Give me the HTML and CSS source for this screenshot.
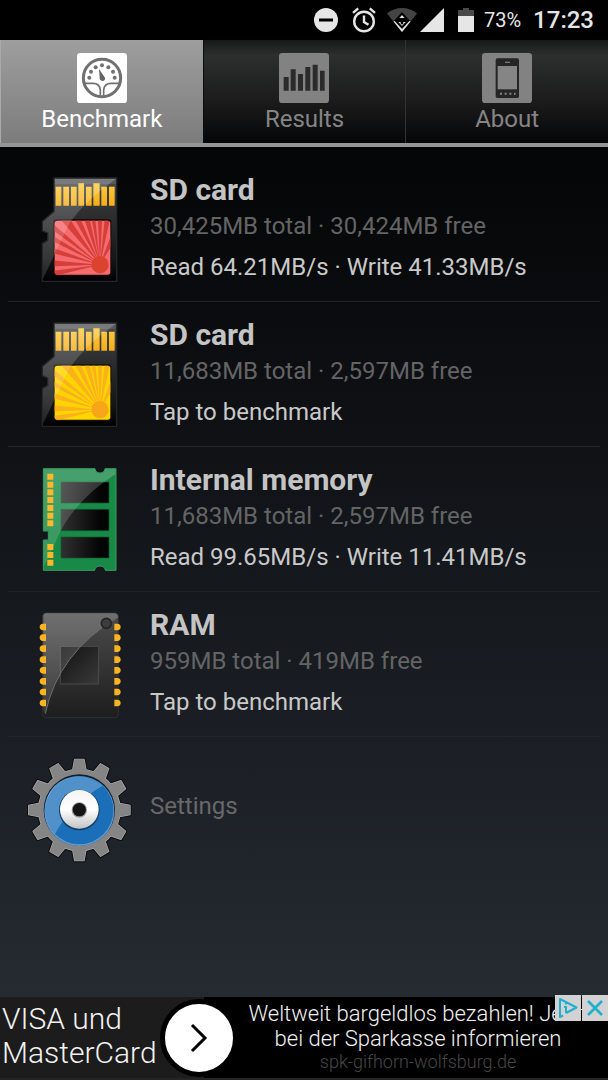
FILE: index.html
```html
<!DOCTYPE html>
<html lang="en">
<head>
<meta charset="utf-8">
<meta name="viewport" content="width=device-width, initial-scale=1">
<title>Benchmark</title>
<link rel="stylesheet" href="styles.css">
</head>
<body>
<svg class="defs" width="0" height="0" aria-hidden="true">
  <defs>
    <linearGradient id="body" x1="0" y1="0" x2="0" y2="1"><stop offset="0" stop-color="#4c4c4d"/><stop offset=".3" stop-color="#303132"/><stop offset=".8" stop-color="#151515"/><stop offset="1" stop-color="#000"/></linearGradient>
    <linearGradient id="gold" x1="0" y1="0" x2="0" y2="1"><stop offset="0" stop-color="#fccb3c"/><stop offset="1" stop-color="#f6ad18"/></linearGradient>
    <linearGradient id="shine" x1="0" y1="0" x2="0" y2="1"><stop offset="0" stop-color="#fff" stop-opacity=".2"/><stop offset="1" stop-color="#fff" stop-opacity=".12"/></linearGradient>
    <linearGradient id="ink" x1="0" y1="0" x2="1" y2="0"><stop offset="0" stop-color="#303030"/><stop offset=".8" stop-color="#050505"/></linearGradient>
    <linearGradient id="chip" x1="0" y1="0" x2="0" y2="1"><stop offset="0" stop-color="#4c4c4c"/><stop offset="1" stop-color="#1d1d1d"/></linearGradient>
    <linearGradient id="die" x1="0" y1="0" x2="1" y2="1"><stop offset="0" stop-color="#111"/><stop offset="1" stop-color="#3a3a3a"/></linearGradient>
    <linearGradient id="hub" x1="0" y1="0" x2="0" y2="1"><stop offset="0" stop-color="#f4f4f4"/><stop offset=".5" stop-color="#fff"/><stop offset="1" stop-color="#c4c4c4"/></linearGradient>
    <clipPath id="label"><rect x="104" y="182" width="167" height="162" rx="8"/></clipPath>
    <path id="card" d="M102 54H290V364H67V250L83 241V219L67 213V184L102 154Z"/>
    <g id="pins">
      <path d="M107 80h17v57h-17zM130 80h17v57h-17zM153 80h17v57h-17zM175 70h17v67h-17zM198 80h17v57h-17zM220 70h19v67h-19zM244 80h17v57h-17zM267 80h17v57h-17z" fill="url(#gold)"/>
    </g>
    <path id="rays" d="M240 314L104 158L128 145ZM240 314L146 145L168 145ZM240 314L180 140L200 140ZM240 314L208 140L222 140ZM240 314L232 140L248 140ZM240 314L258 140L278 140ZM240 314L290 180L310 200ZM240 314L95 188L95 208ZM240 314L95 225L95 242ZM240 314L95 262L95 279ZM240 314L95 301L95 319ZM240 314L95 333L95 350Z"/>
    <path id="tooth" d="M187 96L194 58H222L229 96Z"/>
    <g id="teeth">
      <use href="#tooth"/><use href="#tooth" transform="rotate(30 208 210)"/><use href="#tooth" transform="rotate(60 208 210)"/><use href="#tooth" transform="rotate(90 208 210)"/><use href="#tooth" transform="rotate(120 208 210)"/><use href="#tooth" transform="rotate(150 208 210)"/><use href="#tooth" transform="rotate(180 208 210)"/><use href="#tooth" transform="rotate(210 208 210)"/><use href="#tooth" transform="rotate(240 208 210)"/><use href="#tooth" transform="rotate(270 208 210)"/><use href="#tooth" transform="rotate(300 208 210)"/><use href="#tooth" transform="rotate(330 208 210)"/>
      <circle cx="208" cy="210" r="122"/>
    </g>
  </defs>
</svg>

<div class="screen">
  <header class="status">
    <svg class="status-dnd" width="24" height="24" viewBox="0 0 24 24"><circle cx="12" cy="12" r="12" fill="#e6e6e6"/><path d="M5 12h14" stroke="#000" stroke-width="3"/></svg>
    <svg class="status-alarm" width="24" height="26" viewBox="0 0 24 26" fill="none" stroke="#e6e6e6" stroke-width="2.4"><circle cx="12" cy="14.5" r="9.8"/><path d="M12 8.5v6.5l4.5 2.8M1 5.8L6.2 1.4M23 5.8L17.8 1.4"/></svg>
    <svg class="status-wifi" width="30" height="24" viewBox="0 0 30 24"><path d="M15 24L0 5.5Q6.500 0 15 0T30 5.500Z" fill="#444"/><path d="M6.500 13.500Q15 7 23.500 13.500L15 24Z" fill="#e6e6e6"/><path d="M15 5.500L20 11H10ZM9 13H21L15 19.500Z" fill="#e6e6e6" stroke="#000" stroke-width="2"/><circle cx="15" cy="15" r="1.400" fill="#000"/></svg>
    <svg class="status-signal" width="24" height="24" viewBox="0 0 24 24"><path d="M24 0V24H0Z" fill="#e6e6e6"/></svg>
    <svg class="status-battery" width="16" height="24" viewBox="0 0 16 24"><path d="M5 0h6v2h5v7H0V2h5z" fill="#484a49"/><path d="M0 8h16v16H0z" fill="#e6e6e6"/></svg>
    <span class="percent">73%</span>
    <time class="clock">17:23</time>
  </header>

  <nav class="tabs">
    <button class="tab tab-active" type="button">
      <svg class="tab-icon" viewBox="0 0 150 150"><rect width="150" height="150" rx="10" fill="#fff"/><g fill="none" stroke="#707070"><circle cx="75" cy="75" r="56" stroke-width="9"/><path d="M24 91H48Q68 91 70 111V128M126 91H102Q82 91 80 111V128" stroke-width="5"/></g><path d="M66 48L84 74Q86 83 76 84Q67 82 68 75Z" fill="#666"/><g fill="#707070"><circle cx="37" cy="74" r="6"/><circle cx="42" cy="56" r="6"/><circle cx="56" cy="43" r="6"/><circle cx="75" cy="37" r="6"/><circle cx="94" cy="43" r="6"/><circle cx="108" cy="56" r="6"/><circle cx="113" cy="74" r="6"/></g></svg>
      <span>Benchmark</span>
    </button>
    <button class="tab" type="button">
      <svg class="tab-icon" viewBox="0 0 150 150"><rect width="150" height="150" rx="10" fill="#828282"/><path d="M14 72h15v41H14zM35 49h15v64H35zM57 63h15v50H57zM79 42h15v71H79zM101 35h15v78h-15zM123 53h14v60h-14z" fill="#2b2b2b"/></svg>
      <span>Results</span>
    </button>
    <button class="tab" type="button">
      <svg class="tab-icon" viewBox="0 0 150 150"><rect width="150" height="150" rx="10" fill="#828282"/><rect x="41" y="16" width="70" height="119" rx="5" fill="#252525"/><path d="M47 39h58v70H47z" fill="#858585"/><path d="M69 28h15" stroke="#777" stroke-width="4"/><path d="M54 122h47" stroke="#858585" stroke-width="6" stroke-dasharray="6 8"/></svg>
      <span>About</span>
    </button>
  </nav>

  <main class="list">
    <button class="row" type="button">
      <svg class="row-icon" viewBox="0 0 390 420">
        <use href="#card" fill="url(#body)" stroke="#242526" stroke-width="4"/><path d="M105 57h182v15H105z" fill="#58595c"/><use href="#pins"/>
        <rect x="100" y="178" width="174" height="170" rx="10" fill="#140707"/>
        <g clip-path="url(#label)"><path d="M100 178h175v170H100z" fill="#f46b70"/><use href="#rays" fill="#d63f38"/><circle cx="240" cy="314" r="26" fill="#dc432e"/></g>
        <path d="M104 56H288Q196 120 148 190L69 356V252L85 242V218L69 211V185L104 155Z" fill="url(#shine)"/>
      </svg>
      <span class="info"><strong class="title">SD card</strong><span class="space">30,425MB total · 30,424MB free</span><span class="result">Read 64.21MB/s · Write 41.33MB/s</span></span>
    </button>
    <button class="row" type="button">
      <svg class="row-icon" viewBox="0 0 390 420">
        <use href="#card" fill="url(#body)" stroke="#242526" stroke-width="4"/><path d="M105 57h182v15H105z" fill="#58595c"/><use href="#pins"/>
        <rect x="100" y="178" width="174" height="170" rx="10" fill="#171005"/>
        <g clip-path="url(#label)"><path d="M100 178h175v170H100z" fill="#ffd500"/><use href="#rays" fill="#fbb01c"/><circle cx="240" cy="314" r="26" fill="#f7a61a"/></g>
        <path d="M104 56H288Q196 120 148 190L69 356V252L85 242V218L69 211V185L104 155Z" fill="url(#shine)"/>
      </svg>
      <span class="info"><strong class="title">SD card</strong><span class="space">11,683MB total · 2,597MB free</span><span class="result">Tap to benchmark</span></span>
    </button>
    <button class="row" type="button">
      <svg class="row-icon" viewBox="0 0 390 420">
        <path d="M70 56H225Q227 69 240 69T255 56H288V361H256Q254 348 240 348T224 361H70V270H85V243H70Z" fill="#198947" stroke="#3d9d65" stroke-width="3"/>
        <path d="M123 96h144v63H123zM123 178h144v64H123zM123 261h144v63H123z" fill="url(#ink)" stroke="#0b5c2c" stroke-width="2"/>
        <path d="M72 58H225Q227 71 240 71T256 58H286V73Q150 160 104 283L72 350V272H87V241H72Z" fill="url(#shine)"/>
        <path d="M82 71h18v18H82zM82 95h18v18H82zM82 118h18v18H82zM82 141h18v18H82zM82 165h18v18H82zM82 188h18v18H82zM82 211h18v18H82zM82 282h18v18H82zM82 306h18v18H82zM82 329h18v18H82z" fill="#fcb72b"/>
      </svg>
      <span class="info"><strong class="title">Internal memory</strong><span class="space">11,683MB total · 2,597MB free</span><span class="result">Read 99.65MB/s · Write 11.41MB/s</span></span>
    </button>
    <button class="row" type="button">
      <svg class="row-icon" viewBox="0 0 390 420">
        <rect x="68" y="54" width="227" height="314" rx="10" fill="url(#chip)" stroke="#303030" stroke-width="3"/>
        <path d="M121 154H236V267H121Z" fill="url(#die)" stroke="#4b4b4b" stroke-width="3"/>
        <path d="M78 54H282Q294 55 294 66Q114 174 76 358L70 346V64Q70 55 78 54Z" fill="url(#shine)"/>
        <path d="M294 66Q114 174 76 356" fill="none" stroke="#6c6c6c" stroke-width="3"/>
        <circle cx="259" cy="85" r="15" fill="#3d3d3d" stroke="#242424" stroke-width="5"/>
        <path id="legs" d="M78 86v20H69Q59 105 59 96T69 86ZM78 118v20H69Q59 137 59 128T69 118ZM78 151v20H69Q59 170 59 161T69 151ZM78 184v20H69Q59 203 59 194T69 184ZM78 216v20H69Q59 235 59 226T69 216ZM78 249v20H69Q59 268 59 259T69 249ZM78 281v20H69Q59 300 59 291T69 281ZM78 314v20H69Q59 333 59 324T69 314Z" fill="#fbb421"/>
        <use href="#legs" transform="matrix(-1 0 0 1 361 0)"/>
      </svg>
      <span class="info"><strong class="title">RAM</strong><span class="space">959MB total · 419MB free</span><span class="result">Tap to benchmark</span></span>
    </button>
    <button class="row row-settings" type="button">
      <svg class="gear" viewBox="0 0 420 420">
        <use href="#teeth" fill="#0b0c0e" stroke="#0b0c0e" stroke-width="10" stroke-linejoin="round"/>
        <use href="#teeth" fill="#aaa" stroke="#aaa" stroke-width="4" stroke-linejoin="round"/>
        <use href="#teeth" fill="#858585"/>
        <circle cx="208" cy="210" r="107" fill="#101d2b"/><circle cx="208" cy="213" r="105" fill="#5f9ad2"/><circle cx="208" cy="211" r="102" fill="#1b6fb8"/>
        <path d="M278 137Q184 190 135 282Q104 249 106 207Q111 123 190 110Q240 105 278 137Z" fill="#fff" opacity=".24"/>
        <circle cx="208" cy="210" r="61" fill="#153e66"/><circle cx="208" cy="208" r="58" fill="url(#hub)"/><circle cx="208" cy="210" r="23" fill="#9b9b9b"/><circle cx="208" cy="209" r="20" fill="#151515"/>
      </svg>
      <span class="settings">Settings</span>
    </button>
  </main>

  <aside class="ad">
    <a class="ad-brand" href="#">VISA und MasterCard</a>
    <a class="ad-copy" href="#"><span>Weltweit bargeldlos bezahlen! Jetzt<br>bei der Sparkasse informieren</span><span class="ad-url">spk-gifhorn-wolfsburg.de</span></a>
    <a class="ad-go" href="#" aria-label="Open"><svg width="68" height="68" viewBox="0 0 68 68"><path d="M27 21L40 34L27 47" fill="none" stroke="#000" stroke-width="3"/></svg></a>
    <span class="ad-tools">
      <button class="ad-tool" type="button" aria-label="AdChoices"><svg width="26" height="26" viewBox="0 0 26 26" fill="none" stroke="#20afd0" stroke-width="2"><path d="M8 20.500L5 22V4L21.500 12.500L11 18" stroke-linejoin="round"/><path d="M11 7v2.500M9 12h2v6"/></svg></button>
      <button class="ad-tool" type="button" aria-label="Close ad"><svg width="26" height="26" viewBox="0 0 26 26"><path d="M6 6L20 20M20 6L6 20" stroke="#20afd0" stroke-width="2.500"/></svg></button>
    </span>
  </aside>
</div>
</body>
</html>
```
FILE: styles.css
```css
* { box-sizing: border-box; }
body { margin: 0; background: #000; font-family: Roboto, "Noto Sans", sans-serif; }
button { margin: 0; padding: 0; border: 0; background: none; color: inherit; font: inherit; text-align: left; }
a { color: inherit; text-decoration: none; }
svg { display: block; flex: none; }
.defs { position: absolute; }
.screen { display: flex; flex-direction: column; min-height: 100vh; }

.status { display: flex; align-items: center; justify-content: flex-end; height: 40px; padding-right: 14px; color: #e6e6e6; }
.status-alarm { margin-left: 14px; }
.status-wifi { margin-left: 11px; }
.status-signal { margin-left: 3px; }
.status-battery { margin-left: 14px; }
.percent { margin-left: 10px; font-size: 20px; line-height: 24px; }
.clock { margin-left: 12px; font-size: 24px; font-weight: 500; line-height: 28px; }

.tabs { display: grid; grid-template-columns: repeat(3, 1fr); border-bottom: 4px solid #959595; }
.tab { display: flex; flex-direction: column; align-items: center; height: 103px; padding-top: 13px; border-left: 2px solid #3a3a3a; background: linear-gradient(#171818, #2d2e2e 15%, #1b1b1b 60%, #050608); color: #858585; font-size: 24px; line-height: 32px; }
.tab + .tab { border-left: 1px solid #333; }
.tab-active + .tab { border-left-color: #0c0c0c; }
.tab-active { background: linear-gradient(#9e9e9e, #7c7c7c); border-left: 1px solid #aaa; color: #fff; }
.tab-icon { width: 50px; height: 50px; }

.list { flex: 1; padding: 10px 8px 0; background: linear-gradient(#040506, #0c0e11 25%, #1b1f25 70%, #252b31); }
.row { display: flex; width: 100%; height: 145px; padding: 3px 0 0 12px; border-bottom: 1px solid #212428; }
.row-icon { width: 130px; height: 140px; }
.info { display: flex; flex-direction: column; padding-top: 12px; font-size: 24px; line-height: 36px; }
.title { color: #c4c4c4; font-size: 30px; font-weight: 700; }
.space { color: #646464; }
.result { margin-top: 5px; color: #c9c9c9; }
.row-settings { padding-left: 2px; border: 0; }
.gear { width: 140px; height: 140px; }
.settings { padding-top: 48px; color: #686868; font-size: 24px; line-height: 36px; }

.ad { position: relative; display: grid; grid-template-columns: 204px 1fr; height: 83px; background: #000; border-bottom: 2px solid #242424; color: #f2f2f2; font-weight: 300; }
.ad-brand { padding: 5px 40px 0 2px; background: #1c1c1c; font-size: 30px; line-height: 34px; }
.ad-copy { display: flex; flex-direction: column; padding: 4px 0 0 24px; font-size: 22px; line-height: 25px; text-align: center; }
.ad-url { color: #484848; font-size: 18px; line-height: 22px; }
.ad-go { position: absolute; left: 160px; top: 2px; border: 5px solid #000; border-radius: 50%; background: #fff; }
.ad-tools { position: absolute; right: 0; top: -2px; display: flex; gap: 1px; }
.ad-tool { background: #d2d2d2; }
```
